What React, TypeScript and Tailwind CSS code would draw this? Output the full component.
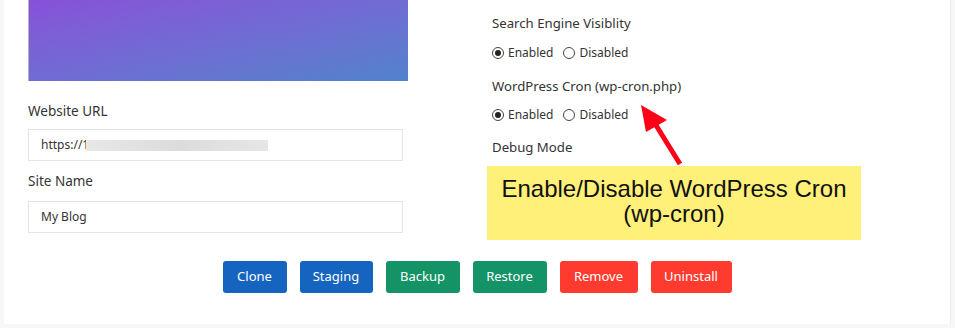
import React from "react";

const font = { fontFamily: '"Noto Sans", "Open Sans", sans-serif' };

function Radio({ checked, label }: { checked?: boolean; label: string }) {
  return (
    <span className="flex items-center gap-[4px] text-[12px] text-[#333]">
      <span className="w-[12px] h-[12px] rounded-full border border-[#444] flex items-center justify-center bg-white">
        {checked && <span className="w-[6px] h-[6px] rounded-full bg-[#222]" />}
      </span>
      <span>{label}</span>
    </span>
  );
}

function Btn({ label, cls, w }: { label: string; cls: string; w: string }) {
  return (
    <button className={`h-[32px] rounded-[3px] text-white text-[13px] flex items-center justify-center ${cls} ${w}`}>
      {label}
    </button>
  );
}

export default function App() {
  return (
    <div className="w-[955px] h-[328px] bg-[#f7f7f7] pl-[4px] overflow-hidden" style={font}>
      <div className="relative w-[947px] h-[324px] bg-white border-r border-[#ececec]">
        <div className="grid grid-cols-[459px_1fr] pl-[24px]">
          <div className="flex flex-col">
            <div className="w-[380px] h-[81px] bg-gradient-to-br from-[#8750d9] to-[#4f82cc] border-l border-[#b8b0c0]" />
            <div className="mt-[20px] text-[13.5px] text-[#333] leading-[20px]">Website URL</div>
            <div className="mt-[8px] w-[375px] h-[32px] border border-[#e2e4ea] flex items-center pl-[12px] text-[12px] text-[#333]">
              <span>https://1</span>
              <span className="w-[182px] h-[11px] -ml-[3px] bg-gradient-to-r from-[#e8e8e8] via-[#dcdcdc] to-[#e6e6e6]" />
            </div>
            <div className="mt-[10px] text-[13.5px] text-[#333] leading-[20px]">Site Name</div>
            <div className="mt-[10px] w-[375px] h-[32px] border border-[#e2e4ea] flex items-center pl-[12px] text-[12px] text-[#333]">
              My Blog
            </div>
          </div>
          <div className="flex flex-col pl-[5px] pt-[13px]">
            <div className="text-[13.2px] text-[#333] leading-[20px]">Search Engine Visiblity</div>
            <div className="mt-[11px] flex gap-[10px]">
              <Radio checked label="Enabled" />
              <Radio label="Disabled" />
            </div>
            <div className="mt-[14px] text-[13.2px] text-[#333] leading-[20px]">WordPress Cron (wp-cron.php)</div>
            <div className="mt-[10px] flex gap-[10px]">
              <Radio checked label="Enabled" />
              <Radio label="Disabled" />
            </div>
            <div className="mt-[13px] text-[13.2px] text-[#333] leading-[20px]">Debug Mode</div>
          </div>
        </div>

        <div className="mt-[28px] flex justify-center gap-[13px]">
          <Btn label="Clone" cls="bg-[#1565c0]" w="w-[64px]" />
          <Btn label="Staging" cls="bg-[#1565c0]" w="w-[73px]" />
          <Btn label="Backup" cls="bg-[#149466]" w="w-[74px]" />
          <Btn label="Restore" cls="bg-[#149466]" w="w-[74px]" />
          <Btn label="Remove" cls="bg-[#ff3b30]" w="w-[78px]" />
          <Btn label="Uninstall" cls="bg-[#ff3b30]" w="w-[81px]" />
        </div>

        <div
          className="absolute left-[483px] top-[166px] w-[374px] h-[74px] bg-[#fff07a] flex flex-col items-center justify-center text-[24px] leading-[25px] text-[#111] pb-[4px]"
          style={{ fontFamily: '"Liberation Sans", Arial, sans-serif' }}
        >
          <span>Enable/Disable WordPress Cron</span>
          <span>(wp-cron)</span>
        </div>

        <svg className="absolute left-[600px] top-[95px]" width="100" height="80" viewBox="0 0 100 80">
          <line x1="76" y1="69" x2="50" y2="27" stroke="#ff0019" strokeWidth="5" />
          <polygon points="37,10 63,25 42,37" fill="#ff0019" />
        </svg>
      </div>
    </div>
  );
}
